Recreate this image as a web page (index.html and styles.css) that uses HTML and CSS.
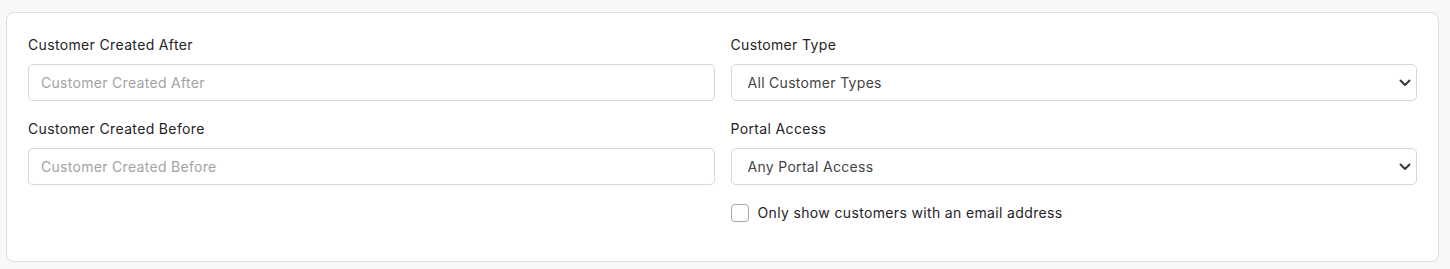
FILE: index.html
```html
<!DOCTYPE html>
<html lang="en">
<head>
    <meta charset="UTF-8">
    <meta name="viewport" content="width=device-width, initial-scale=1.0">
    <title>Customer Filters</title>
    <link rel="stylesheet" href="styles.css">
</head>
<body>

<div class="filter-card">
    <form class="filter-form">
        <div class="form-group">
            <label for="created-after">Customer Created After</label>
            <input type="text" id="created-after" placeholder="Customer Created After">
        </div>
        <div class="form-group">
            <label for="customer-type">Customer Type</label>
            <div class="select-wrap">
                <select id="customer-type">
                    <option>All Customer Types</option>
                    <option>Individual</option>
                    <option>Business</option>
                </select>
                <svg class="chevron" width="12" height="8" viewBox="0 0 12 8"><path d="M1.5 1.5 L6 6 L10.5 1.5" fill="none" stroke="#3a3a3a" stroke-width="2" stroke-linecap="round" stroke-linejoin="round"/></svg>
            </div>
        </div>
        <div class="form-group">
            <label for="created-before">Customer Created Before</label>
            <input type="text" id="created-before" placeholder="Customer Created Before">
        </div>
        <div class="form-group">
            <label for="portal-access">Portal Access</label>
            <div class="select-wrap">
                <select id="portal-access">
                    <option>Any Portal Access</option>
                    <option>Has Portal Access</option>
                    <option>No Portal Access</option>
                </select>
                <svg class="chevron" width="12" height="8" viewBox="0 0 12 8"><path d="M1.5 1.5 L6 6 L10.5 1.5" fill="none" stroke="#3a3a3a" stroke-width="2" stroke-linecap="round" stroke-linejoin="round"/></svg>
            </div>
        </div>
        <div class="form-group empty"></div>
        <div class="form-group">
            <label class="check-row">
                <input type="checkbox" id="has-email">
                <span>Only show customers with an email address</span>
            </label>
        </div>
    </form>
</div>

</body>
</html>
```

FILE: styles.css
```css
body, html {
    margin: 0;
    background: #f8f8f8;
    font-family: "Inter", "Noto Sans", sans-serif;
    color: #1f2328;
}
.filter-card {
    margin: 12px 11px 7px 6px;
    background: #fff;
    border: 1px solid #dedede;
    border-radius: 8px;
    padding: 21px 21px 21px 21px;
}
.filter-form {
    display: grid;
    grid-template-columns: 1fr 1fr;
    column-gap: 16px;
}
.form-group {
    display: flex;
    flex-direction: column;
    margin-bottom: 17px;
}
.form-group label {
    font-size: 14px;
    line-height: 21px;
    margin-bottom: 9px;
    color: #1f2328;
    letter-spacing: 0.35px;
}
.form-group input[type="text"],
.form-group select {
    height: 37px;
    box-sizing: border-box;
    border: 1px solid #d3d6dc;
    border-radius: 5px;
    background: #fff;
    font-family: "Inter", "Noto Sans", sans-serif;
    font-size: 14px;
    letter-spacing: 0.3px;
    outline: none;
    width: 100%;
}
.form-group input[type="text"] {
    padding: 0 12px;
    color: #333;
}
.form-group input::placeholder {
    color: #a3a3a3;
}
.select-wrap {
    position: relative;
}
.form-group select {
    appearance: none;
    -webkit-appearance: none;
    padding: 0 30px 0 16px;
    color: #444;
}
.chevron {
    position: absolute;
    right: 6px;
    top: 15px;
    pointer-events: none;
}
.form-group label.check-row {
    display: flex;
    align-items: center;
    gap: 9px;
    margin: 0;
    cursor: pointer;
}
.check-row input {
    appearance: none;
    -webkit-appearance: none;
    width: 18px;
    height: 18px;
    margin: 0;
    border: 1px solid #a9a9a9;
    border-radius: 4px;
    background: #fff;
}
.check-row span {
    font-size: 14px;
    color: #1f2328;
}
```
